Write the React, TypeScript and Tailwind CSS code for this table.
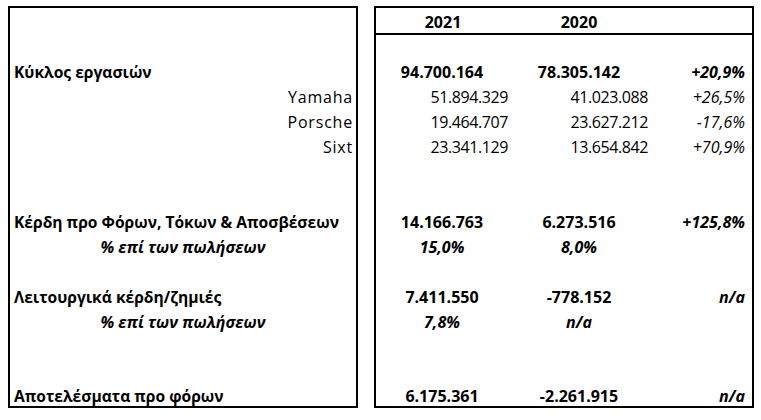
import React from "react";

type Row = {
  label?: string;
  labelKind?: "head" | "sub" | "pct";
  a?: string;
  b?: string;
  c?: string;
  bold?: boolean;
  pct?: boolean;
  cBold?: boolean;
};

const rows: Row[] = [
  {},
  { label: "Κύκλος εργασιών", labelKind: "head", a: "94.700.164", b: "78.305.142", c: "+20,9%", bold: true, cBold: true },
  { label: "Yamaha", labelKind: "sub", a: "51.894.329", b: "41.023.088", c: "+26,5%" },
  { label: "Porsche", labelKind: "sub", a: "19.464.707", b: "23.627.212", c: "-17,6%" },
  { label: "Sixt", labelKind: "sub", a: "23.341.129", b: "13.654.842", c: "+70,9%" },
  {},
  {},
  { label: "Κέρδη προ Φόρων, Τόκων & Αποσβέσεων", labelKind: "head", a: "14.166.763", b: "6.273.516", c: "+125,8%", bold: true, cBold: true },
  { label: "% επί των πωλήσεων", labelKind: "pct", a: "15,0%", b: "8,0%", pct: true },
  {},
  { label: "Λειτουργικά κέρδη/ζημιές", labelKind: "head", a: "7.411.550", b: "-778.152", c: "n/a", bold: true, cBold: true },
  { label: "% επί των πωλήσεων", labelKind: "pct", a: "7,8%", b: "n/a", pct: true },
  {},
  {},
  { label: "Αποτελέσματα προ φόρων", labelKind: "head", a: "6.175.361", b: "-2.261.915", c: "n/a", bold: true, cBold: true },
];

const font = { fontFamily: '"Open Sans", "Noto Sans", sans-serif' };

function rowBox(i: number) {
  // last row is cut short by the bottom border
  return i === rows.length - 1 ? "h-[21px] items-end" : "h-[25px] items-center";
}

function Label({ row }: { row: Row }) {
  if (!row.label) return null;
  if (row.labelKind === "head") return <span className="pl-[4px] font-bold text-[15.6px]">{row.label}</span>;
  if (row.labelKind === "sub") return <span className="ml-auto pr-[3px] tracking-[0.8px]">{row.label}</span>;
  return <span className="mx-auto font-bold italic">{row.label}</span>;
}

function Value({ row, v }: { row: Row; v?: string }) {
  if (!v) return null;
  if (row.bold || row.pct)
    return <span className={`mx-auto font-bold ${row.pct ? "italic" : ""}`}>{v}</span>;
  return <span className="ml-auto tracking-[-0.4px]">{v}</span>;
}

export default function App() {
  return (
    <div className="w-[761px] h-[420px] bg-white text-black pt-[6px] pl-[8px] flex gap-[16px] text-[16px] leading-[19px]" style={font}>
      {/* labels */}
      <div className="w-[350px] h-[402px] border-2 border-black flex flex-col">
        <div className="h-[27px] shrink-0" />
        {rows.map((r, i) => (
          <div key={i} className={`flex shrink-0 ${rowBox(i)}`}>
            <Label row={r} />
          </div>
        ))}
      </div>

      {/* figures */}
      <div className="w-[380px] h-[402px] border-2 border-black flex flex-col">
        <div className="h-[27px] shrink-0 border-b-2 border-black grid grid-cols-[134px_138px_1fr] items-center pt-[4px] font-bold">
          <span className="text-center">2021</span>
          <span className="text-center">2020</span>
          <span />
        </div>
        {rows.map((r, i) => (
          <div key={i} className={`grid grid-cols-[134px_138px_1fr] shrink-0 ${rowBox(i)}`}>
            <div className="flex pr-[2px]">
              <Value row={r} v={r.a} />
            </div>
            <div className="flex">
              <Value row={r} v={r.b} />
            </div>
            <div className={`text-right pr-[7px] italic ${r.cBold ? "font-bold" : ""}`}>{r.c}</div>
          </div>
        ))}
      </div>
    </div>
  );
}
